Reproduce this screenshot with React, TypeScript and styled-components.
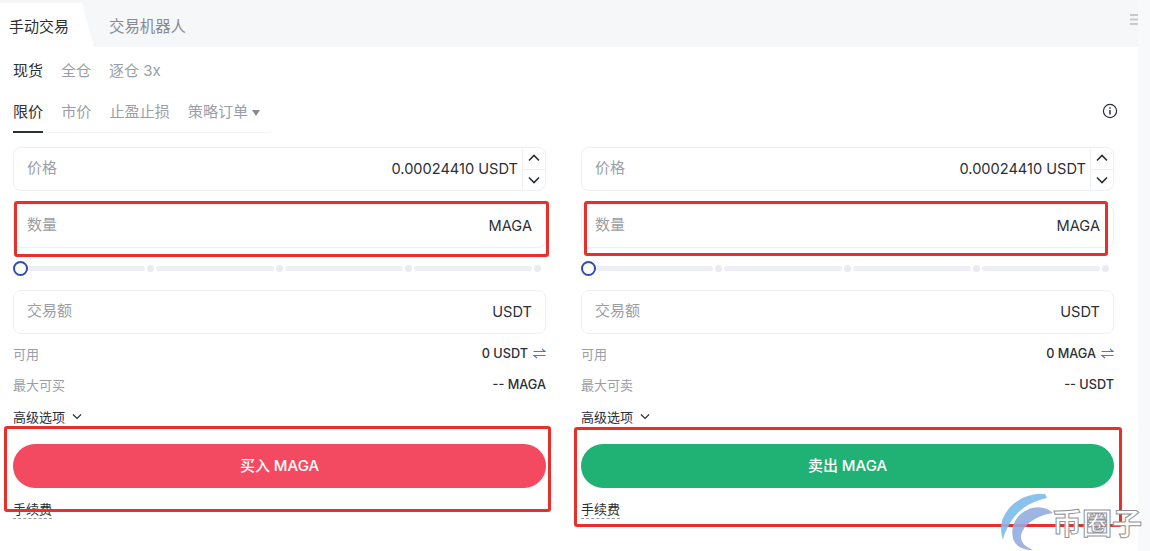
import React from "react";
import styled, { createGlobalStyle } from "styled-components";

const Global = createGlobalStyle`
  html, body { margin: 0; padding: 0; background: #fff; }
  body { font-family: "Inter", "Noto Sans CJK SC", sans-serif; color: #2b2f36; }
  * { box-sizing: border-box; }
`;

const Page = styled.div`
  position: relative;
  width: 1150px;
  height: 551px;
  overflow: hidden;
  background: #f8f9fa;
`;
const Main = styled.main`
  width: 1138px;
  height: 551px;
  background: #fff;
`;
const TabBar = styled.div`
  height: 47px;
  width: 1138px;
  background: #f6f7f9;
  display: flex;
  align-items: center;
  position: relative;
`;
const ActiveTab = styled.div`
  width: 95px;
  height: 47px;
  padding: 3px 0 0 9px;
  display: flex;
  align-items: center;
  font-size: 15px;
  color: #2b2f36;
  background: #fff;
  clip-path: polygon(0 3px, 82px 3px, 94px 47px, 0 47px);
`;
const Tab = styled.div`
  margin-left: 14px;
  padding-top: 3px;
  font-size: 15.4px;
  color: #858a93;
`;
const Handle = styled.svg`
  position: absolute;
  left: 1130px;
  top: 14px;
`;
const Body = styled.div`
  padding: 0 24px 0 13px;
`;
const MarginRow = styled.div`
  height: 45px;
  display: flex;
  align-items: center;
  gap: 18px;
  font-size: 15px;
`;
const Choice = styled.span<{ $on?: boolean }>`
  color: ${(p) => (p.$on ? "#2b2f36" : "#9a9ea6")};
  white-space: nowrap;
`;
const OrderRow = styled.div`
  display: flex;
  align-items: flex-start;
  justify-content: space-between;
  height: 41px;
`;
const OrderTabs = styled.div`
  display: flex;
  gap: 18px;
  width: 257px;
  height: 41px;
  border-bottom: 1px solid #f3f4f6;
  padding-top: 10px;
  font-size: 15.1px;
`;
const OrderTab = styled.span<{ $on?: boolean }>`
  height: 31px;
  line-height: 20px;
  color: ${(p) => (p.$on ? "#2b2f36" : "#9a9ea6")};
  white-space: nowrap;
  ${(p) => (p.$on ? "border-bottom: 2px solid #2b2f36;" : "")}
`;
const Caret = styled.span`
  display: inline-block;
  margin-left: 4px;
  vertical-align: 1px;
  border-left: 4px solid transparent;
  border-right: 4px solid transparent;
  border-top: 6px solid #858a93;
`;
const InfoIcon = styled.svg`
  margin-top: 11px;
  margin-right: -4px;
`;
const Columns = styled.div`
  display: grid;
  grid-template-columns: 533px 533px;
  column-gap: 35px;
  margin-top: 14px;
`;
const Column = styled.section`
  display: flex;
  flex-direction: column;
`;
const Field = styled.div`
  height: 44px;
  margin-bottom: 13px;
  border: 1px solid #eef0f3;
  border-radius: 8px;
  display: flex;
  align-items: center;
  padding-left: 13px;
  overflow: hidden;
`;
const FieldLabel = styled.span`
  color: #9a9ea6;
  flex: 1;
  font-size: 15px;
  padding-bottom: 5px;
`;
const FieldValue = styled.span<{ $stepped?: boolean }>`
  color: #2b2f36;
  font-size: 14.6px;
  padding-right: ${(p) => (p.$stepped ? 4 : 13)}px;
  white-space: nowrap;
`;
const Stepper = styled.div`
  width: 23px;
  height: 100%;
  border-left: 1px solid #eef0f3;
  display: flex;
  flex-direction: column;
`;
const Step = styled.div<{ $down?: boolean }>`
  flex: 1;
  display: flex;
  align-items: center;
  justify-content: center;
  ${(p) => (p.$down ? "border-top: 1px solid #eef0f3;" : "")}
`;
const Slider = styled.div`
  position: relative;
  height: 10px;
  margin: 2px 0 17px;
  display: flex;
  align-items: center;
  gap: 2px;
  padding: 0 5px 0 14px;
`;
const Track = styled.div`
  flex: 1;
  height: 5px;
  border-radius: 3px;
  background: #eeeff6;
`;
const Dot = styled.div`
  width: 7px;
  height: 7px;
  border-radius: 50%;
  background: #e9ebf1;
`;
const Thumb = styled.div`
  position: absolute;
  left: 0;
  top: -2px;
  width: 15px;
  height: 15px;
  border-radius: 50%;
  border: 2px solid #2f4db0;
  background: #fff;
`;
const InfoStack = styled.div`
  margin-top: -5px;
`;
const InfoRow = styled.div<{ $h: number }>`
  height: ${(p) => p.$h}px;
  display: flex;
  align-items: center;
  justify-content: space-between;
  font-size: 13px;
`;
const InfoLabel = styled.span`
  color: #9a9ea6;
`;
const InfoValue = styled.span`
  color: #2b2f36;
  font-size: 12.7px;
  font-weight: 500;
  padding-top: 1px;
  display: flex;
  align-items: center;
  gap: 5px;
`;
const Advanced = styled.div`
  height: 24px;
  display: flex;
  align-items: center;
  gap: 7px;
  font-size: 13px;
  color: #2b2f36;
`;
const Submit = styled.button<{ $bg: string }>`
  height: 44px;
  margin-top: 16px;
  padding: 0 0 3px;
  border: 0;
  border-radius: 22px;
  background: ${(p) => p.$bg};
  color: #fff;
  font: 500 15px "Inter", "Noto Sans CJK SC", sans-serif;
`;
const Fee = styled.div`
  align-self: flex-start;
  margin-top: 13px;
  font-size: 13px;
  line-height: 17px;
  color: #2b2f36;
  border-bottom: 1px dashed #9a9ea6;
`;
const Highlight = styled.div<{ $l: number; $t: number; $w: number; $h: number }>`
  position: absolute;
  left: ${(p) => p.$l}px;
  top: ${(p) => p.$t}px;
  width: ${(p) => p.$w}px;
  height: ${(p) => p.$h}px;
  border: 3px solid #e8302a;
  border-radius: 3px;
  pointer-events: none;
`;
const Watermark = styled.div`
  position: absolute;
  left: 1000px;
  top: 494px;
  display: flex;
  align-items: center;
`;
const LogoMark = styled.svg`
  opacity: 0.9;
  flex: none;
`;
const MarkText = styled.span`
  margin-left: -2px;
  margin-top: -4px;
  font: 700 30px/1 "Noto Sans CJK SC", sans-serif;
  color: #fff;
  -webkit-text-stroke: 1px #8f939a;
`;

const Up = () => (
  <svg width="14" height="10" viewBox="0 0 14 10" fill="none" stroke="#2b2f36" strokeWidth="1.6">
    <path d="M2 7.5 7 2.5l5 5" />
  </svg>
);
const Down = () => (
  <svg width="14" height="10" viewBox="0 0 14 10" fill="none" stroke="#2b2f36" strokeWidth="1.6">
    <path d="M2 2.5l5 5 5-5" />
  </svg>
);
const Swap = () => (
  <svg width="13" height="11" viewBox="0 0 13 11" fill="none" stroke="#4f78c4" strokeWidth="1.2">
    <path d="M0.5 3.5h11.5L9 1M12.5 7.5H1L4 10" />
  </svg>
);
const Chevron = () => (
  <svg width="10" height="7" viewBox="0 0 10 7" fill="none" stroke="#2b2f36" strokeWidth="1.2">
    <path d="M1 1.5l4 4 4-4" />
  </svg>
);
const Logo = () => (
  <LogoMark width="54" height="57" viewBox="0 0 54 57">
    <path d="M45 0C33-1 13 3 3 24c-3 7-2 16 0 22 1-6 3-9 5-13C13 22 24 9 47 4z" fill="#7dbcec" />
    <path d="M53 19C44 11 31 12 22 19 13 26 10 37 14 47c3 6 10 9 19 9-7-3-12-7-12-13 0-9 12-21 32-24z" fill="#94ace0" />
  </LogoMark>
);

type Side = {
  maxLabel: string;
  avail: string;
  max: string;
  action: string;
  bg: string;
};

const TradeColumn = ({ side }: { side: Side }) => (
  <Column>
    <Field>
      <FieldLabel>价格</FieldLabel>
      <FieldValue $stepped>0.00024410 USDT</FieldValue>
      <Stepper>
        <Step><Up /></Step>
        <Step $down><Down /></Step>
      </Stepper>
    </Field>
    <Field>
      <FieldLabel>数量</FieldLabel>
      <FieldValue>MAGA</FieldValue>
    </Field>
    <Slider>
      <Track /><Dot /><Track /><Dot /><Track /><Dot /><Track /><Dot />
      <Thumb />
    </Slider>
    <Field>
      <FieldLabel>交易额</FieldLabel>
      <FieldValue>USDT</FieldValue>
    </Field>
    <InfoStack>
      <InfoRow $h={22}>
        <InfoLabel>可用</InfoLabel>
        <InfoValue>{side.avail} <Swap /></InfoValue>
      </InfoRow>
      <InfoRow $h={40}>
        <InfoLabel>{side.maxLabel}</InfoLabel>
        <InfoValue>{side.max}</InfoValue>
      </InfoRow>
    </InfoStack>
    <Advanced>高级选项 <Chevron /></Advanced>
    <Submit $bg={side.bg}>{side.action}</Submit>
    <Fee>手续费</Fee>
  </Column>
);

const buy: Side = { maxLabel: "最大可买", avail: "0 USDT", max: "-- MAGA", action: "买入 MAGA", bg: "#f34a61" };
const sell: Side = { maxLabel: "最大可卖", avail: "0 MAGA", max: "-- USDT", action: "卖出 MAGA", bg: "#1fb274" };

export default function App() {
  return (
    <Page>
      <Global />
      <Main>
        <TabBar>
          <ActiveTab>手动交易</ActiveTab>
          <Tab>交易机器人</Tab>
          <Handle width="8" height="12" viewBox="0 0 8 12" fill="#c6c9ce">
            <rect y="0" width="8" height="2" />
            <rect y="4.5" width="8" height="2" />
            <rect y="9" width="8" height="2" />
          </Handle>
        </TabBar>
        <Body>
          <MarginRow>
            <Choice $on>现货</Choice>
            <Choice>全仓</Choice>
            <Choice>逐仓 3x</Choice>
          </MarginRow>
          <OrderRow>
            <OrderTabs>
              <OrderTab $on>限价</OrderTab>
              <OrderTab>市价</OrderTab>
              <OrderTab>止盈止损</OrderTab>
              <OrderTab>策略订单<Caret /></OrderTab>
            </OrderTabs>
            <InfoIcon width="16" height="16" viewBox="0 0 16 16" fill="none" stroke="#2b2f36" strokeWidth="1.2">
              <circle cx="8" cy="8" r="6.6" />
              <path d="M8 7v4.5" strokeWidth="1.5" />
              <path d="M8 4.2v1.5" strokeWidth="1.5" />
            </InfoIcon>
          </OrderRow>
          <Columns>
            <TradeColumn side={buy} />
            <TradeColumn side={sell} />
          </Columns>
        </Body>
      </Main>
      <Highlight $l={14} $t={201} $w={535} $h={56} />
      <Highlight $l={584} $t={201} $w={524} $h={55} />
      <Highlight $l={4} $t={426} $w={547} $h={86} />
      <Highlight $l={574} $t={427} $w={548} $h={100} />
      <Watermark>
        <Logo />
        <MarkText>币圈子</MarkText>
      </Watermark>
    </Page>
  );
}
